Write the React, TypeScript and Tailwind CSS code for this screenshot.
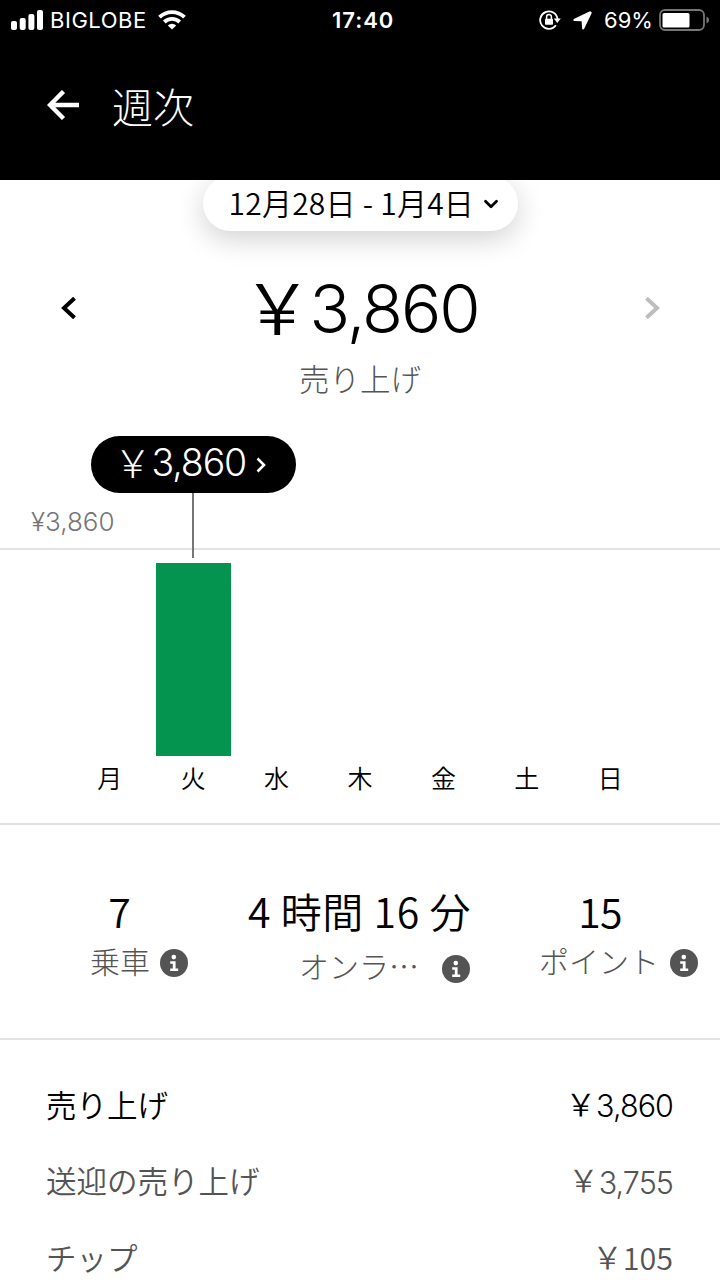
import { LuChevronDown } from 'react-icons/lu';

const days = [
  { label: '月', amount: 0 },
  { label: '火', amount: 3860 },
  { label: '水', amount: 0 },
  { label: '木', amount: 0 },
  { label: '金', amount: 0 },
  { label: '土', amount: 0 },
  { label: '日', amount: 0 },
];

const maxAmount = 3860;

// Fullwidth yen sign
const YEN = '\uFFE5';

const rows = [
  { label: '売り上げ', value: '3,860', className: 'text-black' },
  { label: '送迎の売り上げ', value: '3,755', className: 'text-[#545454]' },
  { label: 'チップ', value: '105', className: 'text-[#545454]' },
];

function StatusBar() {
  return (
    <div className="flex h-10 items-center pl-[11px] pr-[10px] font-['Inter'] text-[22px] font-normal text-white">
      <svg width="32" height="20" viewBox="0 0 32 20" fill="currentColor">
        <rect x="0" y="11" width="6" height="9" rx="2" />
        <rect x="8.7" y="8" width="6" height="12" rx="2" />
        <rect x="17.4" y="4" width="6" height="16" rx="2" />
        <rect x="26" y="0" width="6" height="20" rx="2" />
      </svg>
      <span className="ml-[7px] w-[97px] whitespace-nowrap tracking-[0.025em]">BIGLOBE</span>
      <svg className="ml-[11px]" width="28" height="20" viewBox="0 0 28 20" fill="none" stroke="currentColor" strokeWidth="3.8">
        <path d="M1.5 7.2a18 18 0 0 1 25 0" />
        <path d="M6.3 12a11.2 11.2 0 0 1 15.4 0" />
        <path d="M14 19.6l-4.2-4.2a6 6 0 0 1 8.4 0z" fill="currentColor" stroke="none" />
      </svg>
      <span className="ml-[146px] w-[64px] whitespace-nowrap font-semibold tracking-[0.045em]">17:40</span>
      <svg className="ml-auto" width="22" height="20" viewBox="0 0 22 20" fill="none" stroke="currentColor">
        <path d="M16.9 15.2A8.7 8.7 0 1 1 18.5 9" strokeWidth="1.8" />
        <path d="M14.8 8.6h7l-3.5 4.4z" fill="currentColor" stroke="none" />
        <rect x="6" y="8.8" width="8" height="6" rx="0.8" fill="currentColor" stroke="none" />
        <path d="M7.6 9V6.8a2.4 2.4 0 0 1 4.8 0V9" strokeWidth="1.5" />
      </svg>
      <svg className="ml-[12px]" width="19" height="19" viewBox="0 0 19 19" fill="currentColor">
        <path d="M16.4.6L1.3 7.7C-.1 8.4.1 9.8 1.6 9.9l7 .4.5 6.9c.1 1.5 1.5 1.7 2.2.4L18.5 2.6c.7-1.4-.6-2.7-2.1-2z" />
      </svg>
      <span className="ml-[12px] w-[48px] whitespace-nowrap">69%</span>
      <svg className="ml-[7px]" width="51" height="22" viewBox="0 0 51 22" fill="none">
        <rect x="1" y="1" width="44" height="20" rx="5" stroke="#767676" strokeWidth="1.8" />
        <rect x="3.5" y="4" width="27" height="14.5" rx="1.5" fill="#fff" />
        <path d="M47.5 7.5c3.4 1.6 3.4 5.4 0 7z" fill="#767676" />
      </svg>
    </div>
  );
}

function InfoIcon({ className }: { className: string }) {
  return (
    <svg className={className} width="28" height="28" viewBox="0 0 28 28">
      <circle cx="14" cy="14" r="14" fill="#545454" />
      <circle cx="13.8" cy="8.1" r="2.3" fill="#fff" />
      <path d="M10.2 12.2h5.4v7.2h2.6v2.5h-8v-2.5h2.6v-4.7h-2.6z" fill="#fff" />
    </svg>
  );
}

function Digits({ value }: { value: string }) {
  if (!value.includes(',')) {
    return <span className="-mt-[3px]">{value}</span>;
  }
  return <span className="font-['Inter'] font-light tracking-[-0.03em]">{value}</span>;
}

export default function App() {
  return (
    <div className="h-[1280px] w-[720px] overflow-hidden bg-white font-['Noto_Sans_CJK_JP',sans-serif] font-[350] text-black">
      <header className="relative z-10 h-[180px] bg-black text-white">
        <StatusBar />
        <div className="flex h-[130px] items-center pl-[47px]">
          <svg width="32" height="30" viewBox="0 0 32 30" fill="none" stroke="currentColor" strokeWidth="4.4">
            <path d="M32 15H3M16.5 1.5L3 15l13.5 13.5" />
          </svg>
          <h1 className="ml-[33px] text-[41px] font-light leading-[60px]">週次</h1>
        </div>
      </header>

      {/* Week picker */}
      <div className="mx-auto -mt-[4px] flex h-[55px] w-[315px] items-center whitespace-nowrap rounded-full bg-white pl-[26px] text-[30px] shadow-[0_8px_28px_rgba(0,0,0,0.18)]">
        <span className="-mt-[3px] tracking-[0.008em]">12月28日 - 1月4日</span>
        <LuChevronDown className="ml-[6px] size-[22px]" strokeWidth={3} />
      </div>

      <div className="flex h-[154px] items-center justify-between pl-[61px] pr-[60px]">
        <svg width="16" height="22" viewBox="0 0 16 22" fill="none" stroke="currentColor" strokeWidth="4">
          <path d="M13.5 1.2L3 11l10.5 9.8" />
        </svg>
        <div className="flex items-center whitespace-nowrap pt-[2px] text-[67px] leading-[100px]">
          <span className="-mt-[8px] text-[70px] leading-[100px] tracking-[-0.04em]">{YEN}</span>
          <Digits value="3,860" />
        </div>
        <svg width="16" height="22" viewBox="0 0 16 22" fill="none" stroke="#bdbdbd" strokeWidth="4">
          <path d="M2.5 1.2L13 11 2.5 20.8" />
        </svg>
      </div>
      <p className="-mt-[29px] text-center text-[30.5px] font-light leading-[44px] text-[#545454]">売り上げ</p>

      {/* Daily chart */}
      <section className="relative mt-[36px] h-[389px] border-b-2 border-[#e2e2e2]">
        <div className="absolute left-[91px] top-0 flex h-[57px] w-[205px] items-center rounded-full bg-black pb-[2px] pl-[23px] text-[37.5px] text-white">
          <span className="-mt-[5px] font-light">{YEN}</span>
          <Digits value="3,860" />
          <svg className="ml-[10px] mt-[3px]" width="10" height="16" viewBox="0 0 10 16" fill="none" stroke="currentColor" strokeWidth="2.6">
            <path d="M1.5 1.5L8 8l-6.5 6.5" />
          </svg>
        </div>
        <div className="h-[114px] border-b-2 border-[#e2e2e2] pl-[31px] pt-[65px] text-[26px] leading-[38px] text-[#757575]">
          <span className="font-['Inter'] font-light">¥3,860</span>
        </div>
        <div className="absolute left-[192px] top-[57px] h-[65px] w-[2px] bg-[#767676]" />
        <div className="flex h-[206px] items-end px-[68px]">
          {days.map((day) => (
            <div key={day.label} className="flex flex-1 justify-center">
              <div className="w-[75px] bg-[#05944f]" style={{ height: (day.amount / maxAmount) * 193 }} />
            </div>
          ))}
        </div>
        <div className="flex px-[68px] text-[25px] leading-[42px]">
          {days.map((day) => (
            <span key={day.label} className="flex-1 text-center">
              {day.label}
            </span>
          ))}
        </div>
      </section>

      {/* Trips, time online, points */}
      <section className="flex h-[215px] whitespace-nowrap border-b-2 border-[#e2e2e2] pt-[55px] text-[#545454]">
        <div className="w-[239px]">
          <p className="text-center text-[41px] leading-[60px] text-black">7</p>
          <div className="flex items-center pl-[90px] text-[30px] font-light leading-[40px]">
            <span>乗車</span>
            <InfoIcon className="ml-[10px] mt-[6px]" />
          </div>
        </div>
        <div className="w-[241px]">
          <p className="text-center text-[41px] leading-[60px] tracking-[0.014em] text-black">4 時間 16 分</p>
          <div className="flex items-center pl-[60px] pt-[5px] text-[30px] font-light leading-[40px]">
            <span>オンラ…</span>
            <InfoIcon className="ml-[23px] mt-[7px]" />
          </div>
        </div>
        <div className="w-[240px]">
          <p className="text-center text-[41px] leading-[60px] tracking-[-0.02em] text-black">15</p>
          <div className="flex items-center pl-[59px] text-[30px] font-light leading-[40px]">
            <span>ポイント</span>
            <InfoIcon className="ml-[11px] mt-[6px]" />
          </div>
        </div>
      </section>

      <ul className="pt-[28px]">
        {rows.map((row) => (
          <li key={row.label} className={`flex h-[76.5px] items-center justify-between pl-[46px] pr-[47px] text-[30.5px] ${row.className}`}>
            <span className="-mt-[3px]">{row.label}</span>
            <span className="flex items-center">
              <span className="-mt-[5px]">{YEN}</span>
              <Digits value={row.value} />
            </span>
          </li>
        ))}
      </ul>
    </div>
  );
}
